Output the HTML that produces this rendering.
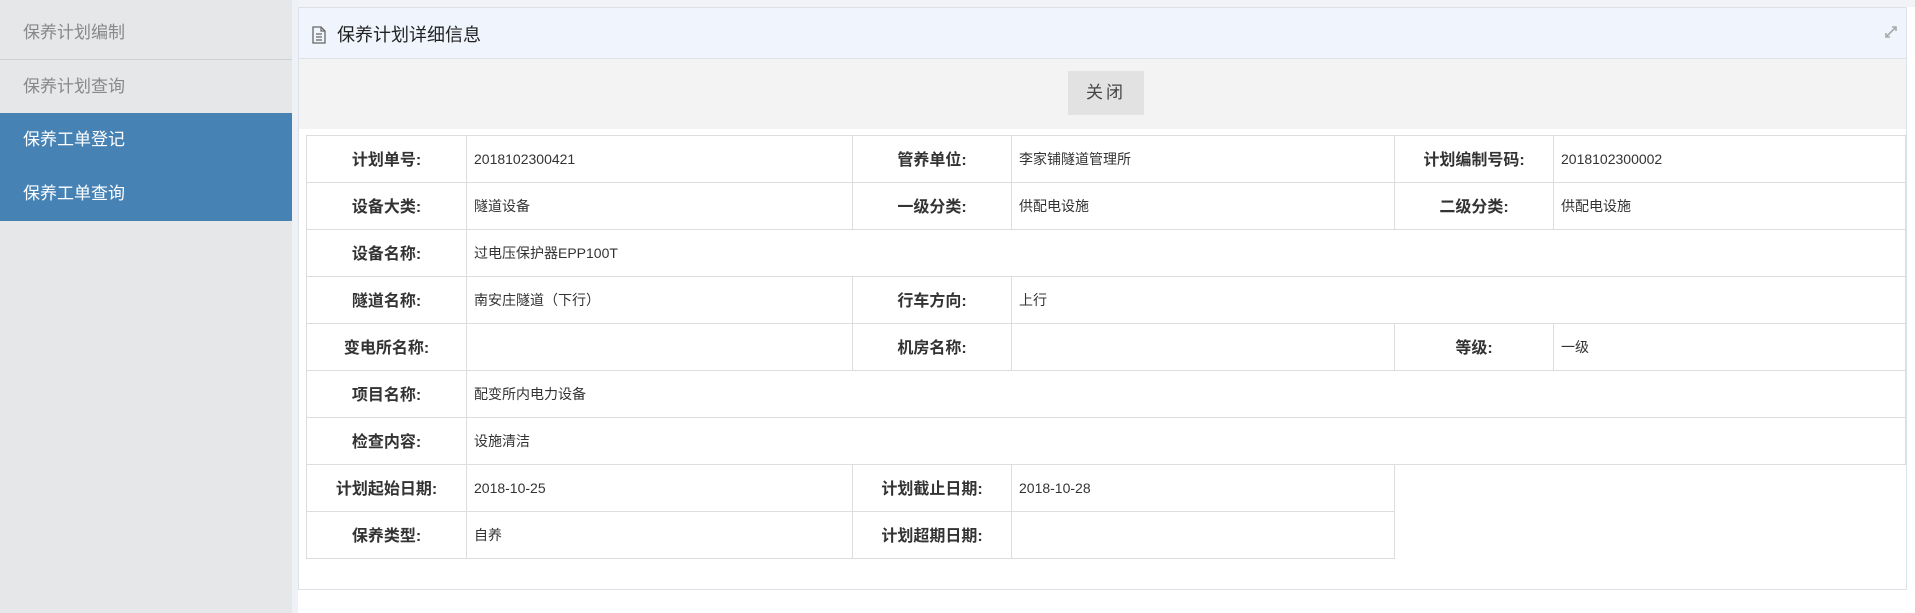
<!DOCTYPE html>
<html><head><meta charset="utf-8">
<style>
*{margin:0;padding:0;box-sizing:border-box}
body{width:1915px;height:613px;background:#fff;font-family:"Liberation Sans","Noto Sans CJK SC",sans-serif;color:#333;position:relative;overflow:hidden}
.side{position:absolute;left:0;top:0;width:292px;height:613px;background:#e6e7e9}
.top{position:absolute;left:0;top:0;width:1915px;height:7px;background:#f1f3f7}
.gap{position:absolute;left:292px;top:0;width:6px;height:613px;background:#eef1f6}
.it{position:absolute;left:0;width:292px;height:54px;line-height:54px;padding-left:23px;font-size:17px;color:#888}
.it.b{background:#4682b4;color:#fff}
.panel{position:absolute;left:298px;top:7px;width:1609px;height:583px;background:#fff;border:1px solid #dde1e8}
.hd{height:51px;background:#f0f5fd;border-bottom:1px solid #dde1e8;position:relative}
.hd .t{position:absolute;left:38px;top:13px;font-size:18px;color:#222}
.tb{height:70px;background:#f3f3f3;position:relative}
.btn{position:absolute;left:769px;top:12px;width:76px;height:44px;background:#e2e2e2;font-size:17px;line-height:44px;text-align:center;color:#444;letter-spacing:3px}
table{position:absolute;left:7px;top:127px;border-collapse:collapse;table-layout:fixed}
td{border:1px solid #ddd;height:47px;font-size:14px;padding-left:7px;vertical-align:middle;line-height:20px}
td.l{font-weight:bold;font-size:16px;text-align:center;padding-left:0;padding-top:3px;color:#333}
</style></head><body>
<div class="top"></div>
<div class="gap"></div>
<div class="side">
<div class="it" style="top:6px;border-bottom:1px solid #cfd1d4">保养计划编制</div>
<div class="it" style="top:60px">保养计划查询</div>
<div class="it b" style="top:113px">保养工单登记</div>
<div class="it b" style="top:167px">保养工单查询</div>
</div>
<div class="panel">
<div class="hd">
<svg style="position:absolute;left:13px;top:18px" width="14" height="18" viewBox="0 0 14 18"><path d="M1 1h8l4 4v12H1z" fill="none" stroke="#666" stroke-width="1.3"/><path d="M9 1v4h4M4 8h6M4 11h6M4 14h6" stroke="#666" stroke-width="1.2" fill="none"/></svg>
<span class="t">保养计划详细信息</span>
<svg style="position:absolute;right:8px;top:17px" width="14" height="14" viewBox="0 0 14 14"><path d="M2 12L12 2M8 2h4v4M2 8v4h4" stroke="#aaa" stroke-width="1.6" fill="none"/></svg>
</div>
<div class="tb"><div class="btn">关闭</div></div>
<table>
<colgroup><col style="width:160px"><col style="width:386px"><col style="width:159px"><col style="width:383px"><col style="width:159px"><col style="width:352px"></colgroup>
<tr><td class="l">计划单号:</td><td>2018102300421</td><td class="l">管养单位:</td><td>李家铺隧道管理所</td><td class="l">计划编制号码:</td><td>2018102300002</td></tr>
<tr><td class="l">设备大类:</td><td>隧道设备</td><td class="l">一级分类:</td><td>供配电设施</td><td class="l">二级分类:</td><td>供配电设施</td></tr>
<tr><td class="l">设备名称:</td><td colspan="5">过电压保护器EPP100T</td></tr>
<tr><td class="l">隧道名称:</td><td>南安庄隧道（下行）</td><td class="l">行车方向:</td><td colspan="3">上行</td></tr>
<tr><td class="l">变电所名称:</td><td></td><td class="l">机房名称:</td><td></td><td class="l">等级:</td><td>一级</td></tr>
<tr><td class="l">项目名称:</td><td colspan="5">配变所内电力设备</td></tr>
<tr><td class="l">检查内容:</td><td colspan="5">设施清洁</td></tr>
<tr><td class="l">计划起始日期:</td><td>2018-10-25</td><td class="l">计划截止日期:</td><td>2018-10-28</td></tr>
<tr><td class="l">保养类型:</td><td>自养</td><td class="l">计划超期日期:</td><td></td></tr>
</table>
</div>
</body></html>
